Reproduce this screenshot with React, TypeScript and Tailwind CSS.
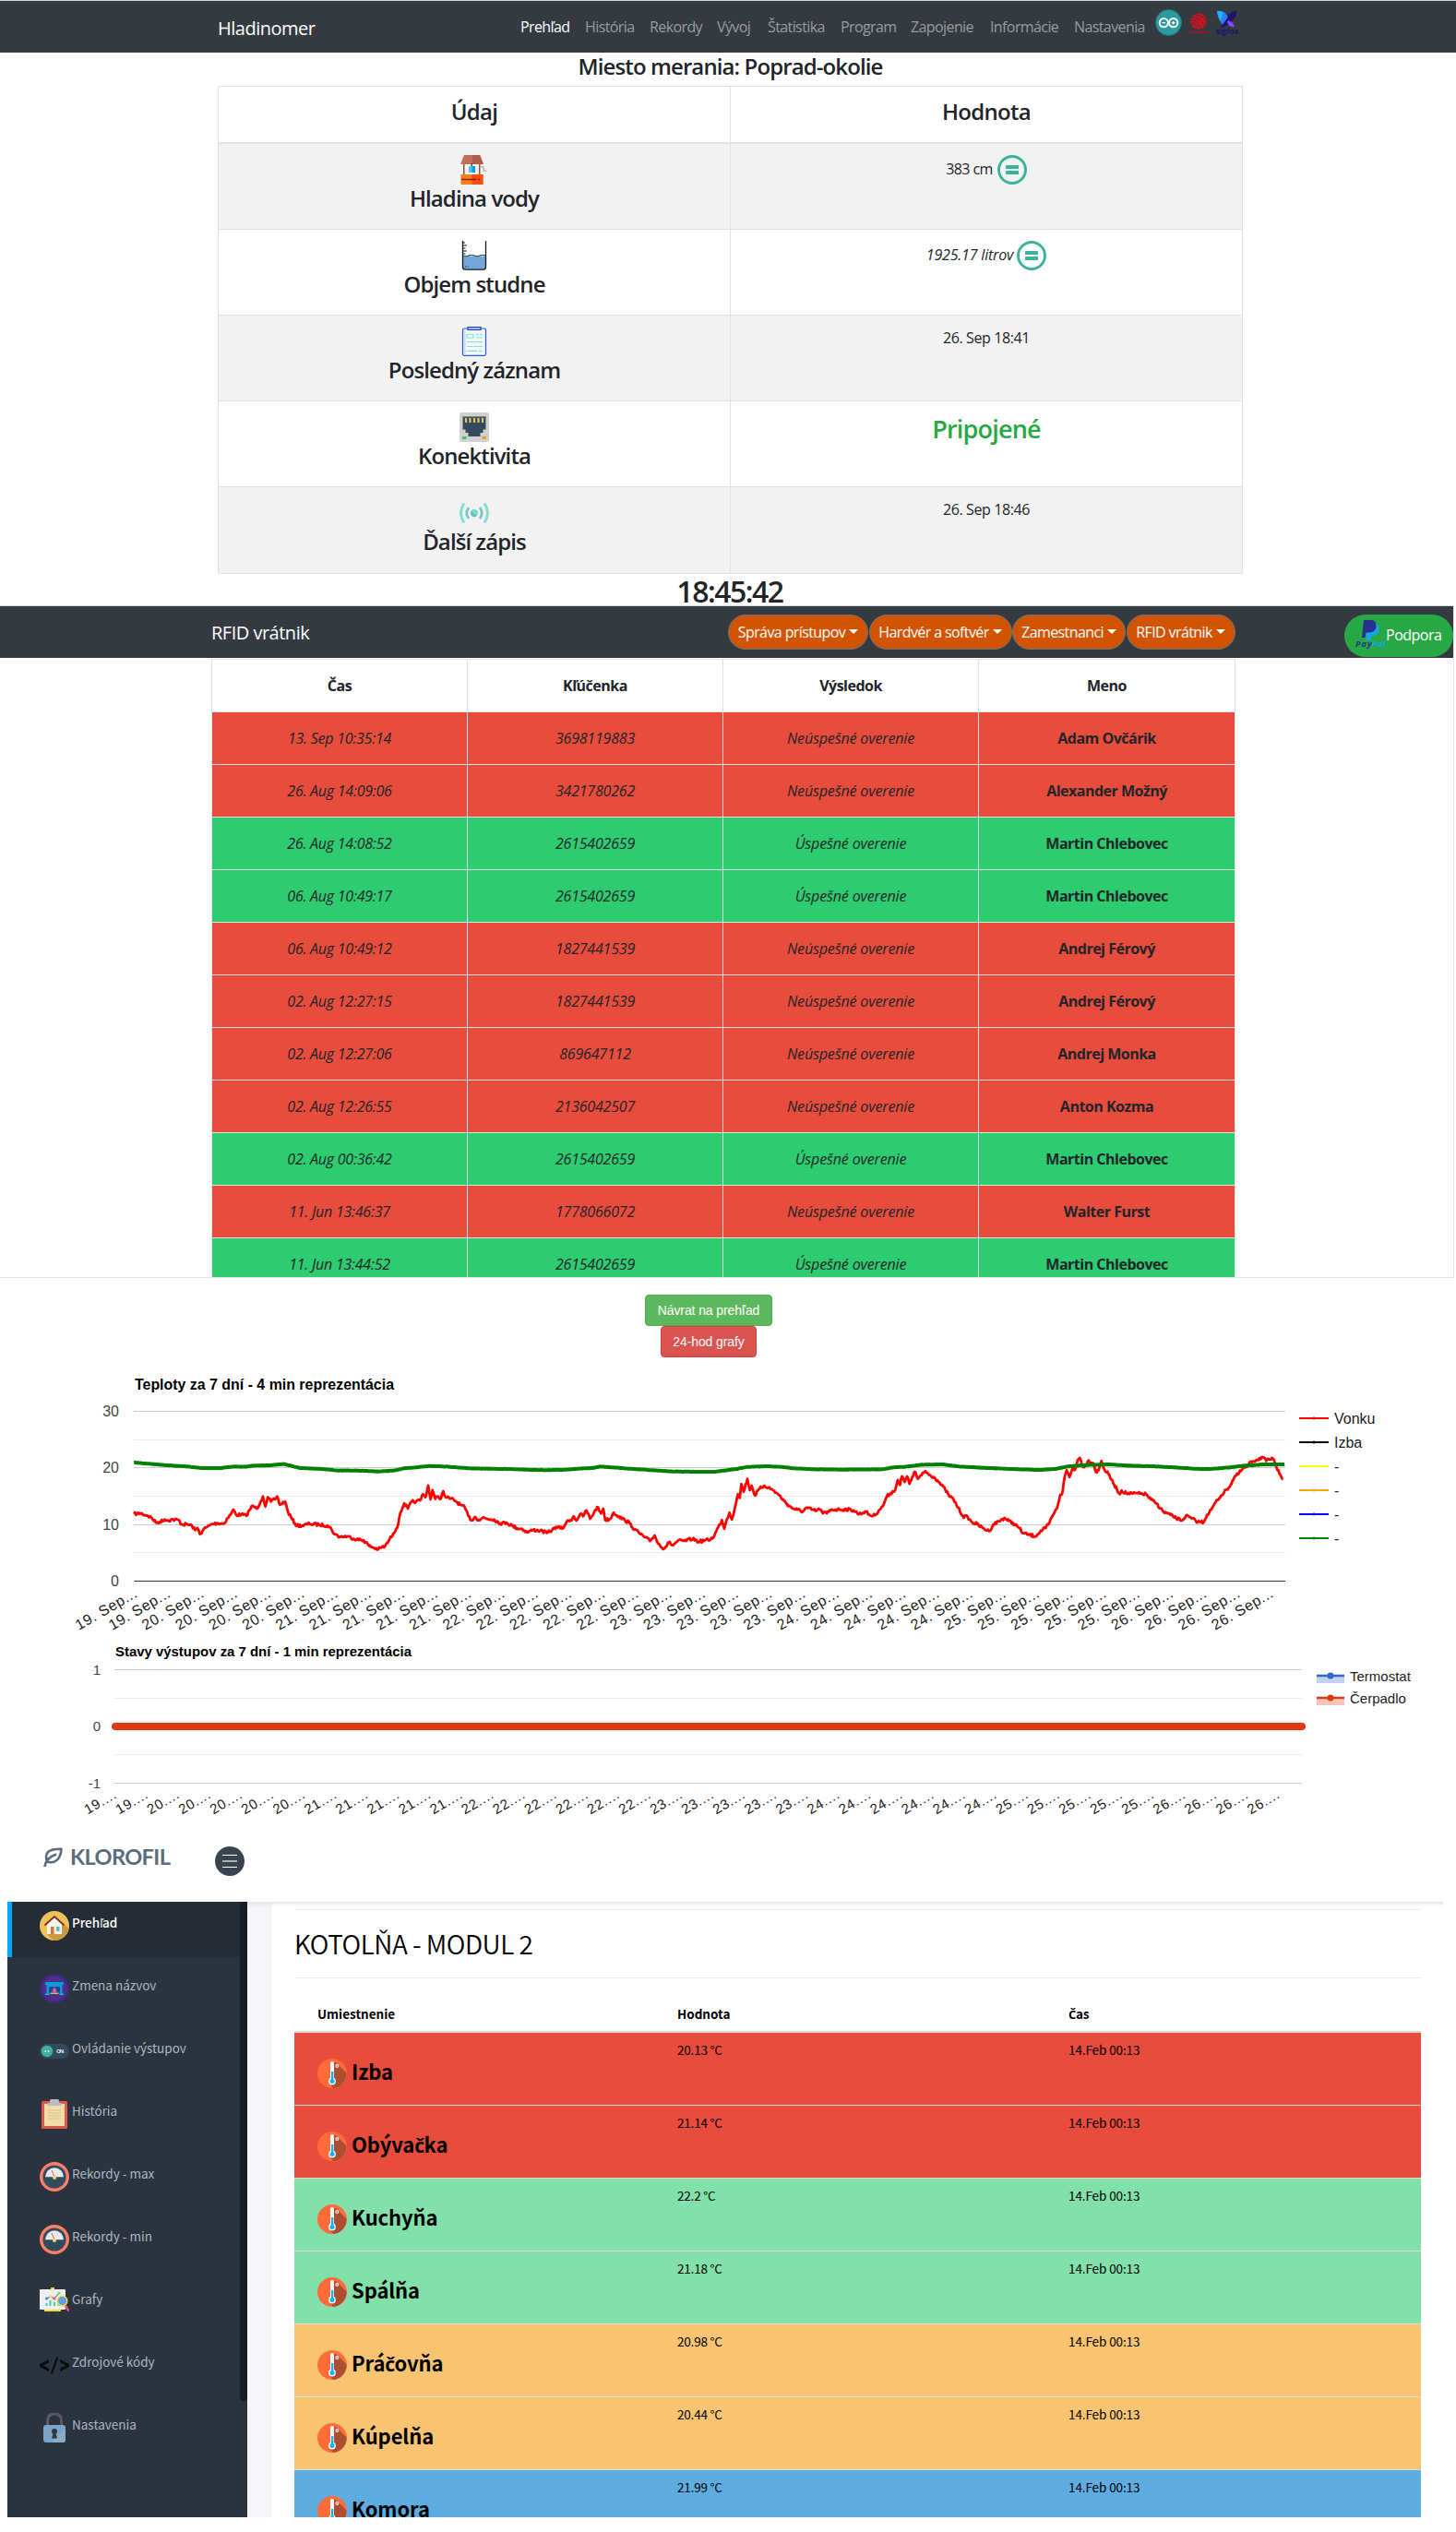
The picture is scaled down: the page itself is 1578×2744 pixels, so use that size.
import React from "react";

const UI = "font-['Open_Sans','Noto_Sans',sans-serif]";
const SRC = "font-['Noto_Sans_CJK_SC','Open_Sans',sans-serif]";

/* Carons on l and c come from Open Sans, which has those letters as single glyphs. */
const Mixed = ({ children }: { children: string }) => (
  <>
    {children.split(/([ľčČ])/).map((part, i) =>
      i % 2 ? <span key={i} className="font-['Open_Sans',sans-serif] text-[0.96em] leading-none tracking-[-0.03em]">{part}</span> : part
    )}
  </>
);

/* ---------- icons ---------- */

const WellIcon = () => (
  <svg width="32" height="32" viewBox="0 0 32 32">
    <path d="M5 0h17l4 10H1z" fill="#c2705a" />
    <path d="M14 0h8l4 10H14z" fill="#ad5c48" />
    <path d="M5.500 10H21v11H5.500z" fill="#f7f1ef" />
    <path d="M4 10h1.500v11H4zM21 10h1.500v11H21z" fill="#8a5244" />
    <path d="M12.500 9h1.500v4h-1.500z" fill="#7d3f33" />
    <path d="M10 12h7v7h-7z" fill="#4fc3f7" />
    <path d="M13.500 12H17v7h-3.500z" fill="#039be5" />
    <path d="M22 13h4v4h3" fill="none" stroke="#cbb3ab" strokeWidth="1.500" />
    <path d="M1.500 21h24v11h-24z" fill="#ff7a1a" />
    <path d="M13.500 21h12v11h-12z" fill="#ff4d0d" />
    <path d="M2 26.500h16M20 26.500h2" stroke="#7b2d10" strokeWidth="1.300" />
  </svg>
);

const BeakerIcon = () => (
  <svg width="32" height="32" viewBox="0 0 32 32">
    <path d="M3.500 16.500h25V29q0 2-2.500 2H6q-2.500 0-2.500-2z" fill="#74a7d8" />
    <path d="M3.500 0v28q0 3.200 3 3.200h19q3 0 3-3.200V0" fill="none" stroke="#15181c" strokeWidth="1.300" />
    <path d="M4 2h2M4 5h4M4 8h2.500M4 11h4M4 14h2.500" stroke="#15181c" strokeWidth="1.200" />
    <path d="M4 16q3 1.500 6 0t6 0 6 0 6 0" fill="none" stroke="#26445e" strokeWidth="1.200" />
    <path d="M6 28h2M9 28h1" stroke="#26445e" strokeWidth="1.200" />
  </svg>
);

const ReportIcon = () => (
  <svg width="32" height="32" viewBox="0 0 32 32">
    <rect x="3.500" y="2" width="25" height="29.300" rx="1.500" fill="#f3f8ff" stroke="#2f57cc" strokeWidth="1.200" />
    <path d="M4.500 3h2v27h-2z" fill="#ccd9f5" />
    <path d="M9 .7h14v2.600H9z" fill="#d5defa" stroke="#1540c4" strokeWidth="1.200" />
    <path d="M8 8.500h7v3.500H8z" fill="none" stroke="#7fe5d2" strokeWidth="1.200" />
    <path d="M18 8.500h3M22 8.500h3M18 12h7M8 16.500h17M8 21.500h6M15 21.500h10M8 26.300h11M21 26.300h4" stroke="#7fe5d2" strokeWidth="1.200" />
  </svg>
);

const PortIcon = () => (
  <svg width="32" height="32" viewBox="0 0 32 32">
    <rect width="32" height="32" rx="2.500" fill="#d0d2cf" />
    <path d="M3.500 4h25v14.500h-3V22h-3v4h-13v-4h-3v-3.500h-3z" fill="#34495e" />
    <path d="M3.500 4h25v1.200h-25z" fill="#7f8c8d" />
    <path d="M7 6v5M11.500 6v5M16 6v5M20.500 6v5M25 6v5" stroke="#e2c45c" strokeWidth="2.200" />
    <path d="M3 26h4.500v3H3z" fill="#4fba6f" />
    <path d="M24.500 26H29v3h-4.500z" fill="#f29c1f" />
  </svg>
);

const SignalIcon = () => (
  <svg width="32" height="32" viewBox="0 0 32 32" fill="none">
    <path d="M5 5.500Q-2 16 5 26.500M27 5.500Q34 16 27 26.500" stroke="#84ddd3" strokeWidth="3" />
    <path d="M10 10Q5.500 16 10 22M22 10Q26.500 16 22 22" stroke="#7cc5bf" strokeWidth="2.800" />
    <circle cx="16" cy="16" r="4.200" fill="#7cd9ce" />
    <path d="M12.500 14a4 4 0 0 0 6 5z" fill="#6fbab2" />
  </svg>
);

const EqualIcon = () => (
  <svg width="32" height="32" viewBox="0 0 32 32">
    <circle cx="16" cy="16" r="14.500" fill="none" stroke="#3bb29b" strokeWidth="2.900" />
    <rect x="9" y="11" width="14" height="4" rx=".6" fill="#3bb29b" />
    <rect x="9" y="17" width="14" height="4" rx=".6" fill="#3bb29b" />
  </svg>
);

const ArduinoIcon = () => (
  <svg width="29" height="29" viewBox="0 0 29 29">
    <circle cx="14.500" cy="14.500" r="14" fill="#2c9a9e" stroke="#14797f" />
    <g fill="none" stroke="#fff" strokeWidth="2">
      <circle cx="9.300" cy="14.700" r="4.600" />
      <circle cx="19.700" cy="14.700" r="4.600" />
    </g>
    <path d="M7.500 14.700h3.600M17.900 14.700h3.600M19.700 12.900v3.600" stroke="#fff" strokeWidth="1.300" />
  </svg>
);

const EspressifIcon = () => (
  <svg width="22" height="22" viewBox="0 0 22 22">
    <circle cx="11" cy="9" r="8.800" fill="#cc1220" />
    <g fill="none" stroke="#363b42" strokeWidth="1">
      <path d="M3 4.500q9-1 14 10" />
      <path d="M6 1.500q10 1 14 9" />
      <path d="M3 8q7-.5 10 8" />
      <path d="M4.500 11.500q4 0 5 5" />
    </g>
    <path d="M1 20.700h20" stroke="#b01020" strokeWidth="1.400" />
  </svg>
);

const SigfoxIcon = () => (
  <svg width="26" height="30" viewBox="0 0 26 30">
    <path d="M2 2Q9 0 14 9q1 5-4 10Q2 10 2 2z" fill="#1fb0fa" />
    <path d="M9 3q5 3 5 9l-4 7-4-6z" fill="#2d7df6" />
    <path d="M24 2q-8-1-11 8l-7 9q3 2 7-2 9-5 11-15z" fill="#25106e" />
    <path d="M14 12q6 2 7 7-6 1-8-5z" fill="#7c4bff" />
    <text x="13" y="27" textAnchor="middle" fontSize="8.500" fontWeight="700" fill="#22126b" fontFamily="Open Sans" textLength="25">sigfox</text>
  </svg>
);

const PaypalIcon = () => (
  <svg width="33" height="33" viewBox="0 0 33 33">
    <path d="M13 5h9q4.500 1 3.500 7t-8 6l-1 5h-5z" fill="#12a5ee" />
    <path d="M9 1h9q5 1 4.500 7t-8 6.500h-3L10.500 20H7z" fill="#27318f" />
    <text x="0" y="30" fontSize="9" fontWeight="700" fontStyle="italic" fill="#27318f" fontFamily="Open Sans" textLength="17">Pay</text>
    <text x="18" y="30" fontSize="9" fontWeight="700" fontStyle="italic" fill="#12a5ee" fontFamily="Open Sans" textLength="14">Pal</text>
  </svg>
);

const HouseIcon = () => (
  <svg width="32" height="32" viewBox="0 0 32 32">
    <circle cx="16" cy="16" r="16" fill="#eec15a" />
    <path d="M26 14l5.700 5A16 16 0 0 1 15 32l-7-7z" fill="#c99a44" />
    <path d="M8 14l8-8 8 8v11H8z" fill="#f3f3e8" />
    <path d="M5.500 15.500L16 6l10.500 9.500" fill="none" stroke="#7c2c22" strokeWidth="1.700" />
    <path d="M12 17h3.500v8H12z" fill="#e2702f" />
    <path d="M18 17h3.500v5H18z" fill="#5bb8c4" />
  </svg>
);

const FireplaceIcon = () => (
  <svg width="32" height="32" viewBox="0 0 32 32">
    <circle cx="16" cy="16" r="16" fill="#3d2a7d" />
    <circle cx="16" cy="16" r="13.500" fill="#4a3189" />
    <path d="M6 9h20v3H6zM7.500 12h17v10h-17z" fill="#1398dc" />
    <path d="M10 14h12v8H10z" fill="#134b8f" />
    <path d="M6 21.500h4.500V23H6zM21.500 21.500H26V23h-4.500z" fill="#1ab2e8" />
    <path d="M16 14.500q3 3 2 5.500h-4q-1-3 2-5.500z" fill="#f04fa3" />
    <path d="M11.500 20.500h9V22h-9z" fill="#d7b85a" />
  </svg>
);

const SwitchIcon = () => (
  <svg width="32" height="32" viewBox="0 0 32 32">
    <rect y="8" width="32" height="16" rx="8" fill="#324a5e" />
    <circle cx="8" cy="16" r="6.200" fill="#3db39e" />
    <path d="M5.500 16h1.500M8.800 16h1.500" stroke="#fff" strokeWidth="1.600" />
    <text x="18" y="18.200" fontSize="6" fontWeight="700" fill="#e4eaee" fontFamily="Open Sans" textLength="8.500">ON</text>
  </svg>
);

const ClipboardIcon = () => (
  <svg width="32" height="32" viewBox="0 0 32 32">
    <rect x="2" y="2" width="28" height="30" rx="1.500" fill="#e2574c" />
    <path d="M5 5h22v24H5z" fill="#f2ddaa" />
    <path d="M9 12h14M9 15h14M9 18h14M9 21h14" stroke="#d9c189" strokeWidth="1" />
    <path d="M8 7V5q0-1 1.500-1H11V1.500Q11 0 12.500 0h7Q21 0 21 1.500V4h1.500Q24 4 24 5v2z" fill="#b9bdc3" />
  </svg>
);

const GaugeIcon = () => (
  <svg width="32" height="32" viewBox="0 0 32 32">
    <circle cx="16" cy="16" r="14.300" fill="#324a5e" stroke="#ff7f66" strokeWidth="3.400" />
    <path d="M6 16.300a10 10 0 0 1 20 0z" fill="#e6e9ee" />
    <path d="M13 9l3 7" stroke="#f1543f" strokeWidth="1" />
    <circle cx="16" cy="17" r="2" fill="#ffd15c" />
  </svg>
);

const BoardIcon = () => (
  <svg width="32" height="32" viewBox="0 0 32 32">
    <path d="M11 25l-2 5M18 25l2 5" stroke="#27406b" strokeWidth="1.500" />
    <path d="M12 0h4v3h-4zM5 24h18v2H5z" fill="#f5dc2e" />
    <rect y="2" width="28" height="22" rx="1" fill="#eceef3" />
    <path d="M7.500 20v-3M11.500 20v-6M16 20v-4M20.500 20v-5" stroke="#43cfa9" strokeWidth="2" />
    <path d="M7 12l5-2 4 2 5-6" fill="none" stroke="#3c5a84" strokeWidth="1" />
    <circle cx="7.500" cy="12" r="1.500" fill="#3f7fe8" />
    <circle cx="12" cy="9.800" r="1.500" fill="#f5dc2e" />
    <circle cx="16" cy="12" r="1.500" fill="#f0507a" />
    <circle cx="21" cy="6" r="1.500" fill="#8ad05e" />
    <path d="M27.500 19l4 6.500" stroke="#f0507a" strokeWidth="2.600" />
    <circle cx="24.500" cy="14.500" r="5.300" fill="#5e9cf5" stroke="#f5dc2e" strokeWidth="1.500" />
  </svg>
);

const CodeIcon = () => (
  <svg width="32" height="32" viewBox="0 0 32 32">
    <path d="M10 10v3.200l-6.300 3.300 6.300 3.300V23L0 18v-3zM22 10v3.200l6.300 3.300-6.300 3.300V23l10-5v-3z" fill="#0a0c0f" />
    <path d="M18 7.500h2.300L14 25.500h-2.300z" fill="#0a0c0f" />
  </svg>
);

const LockIcon = () => (
  <svg width="32" height="32" viewBox="0 0 32 32">
    <path d="M8.500 14V8q0-7 7.500-7t7.500 7v6" fill="none" stroke="#5b5560" strokeWidth="3" />
    <path d="M9 14V8q1-6 7-6.500" fill="none" stroke="#6f6169" strokeWidth="1.200" />
    <rect x="4" y="13" width="24" height="19" rx="3" fill="#78a5c8" />
    <path d="M13 32L28 17v12q0 3-3 3z" fill="#86acc8" />
    <circle cx="16" cy="20" r="3" fill="#373540" />
    <path d="M15 21h2l2 6.500h-6z" fill="#373540" />
  </svg>
);

const ThermoIcon = () => (
  <svg width="32" height="32" viewBox="0 0 32 32">
    <circle cx="16" cy="16" r="16" fill="#ff6c3a" />
    <path d="M20.500 4.500l11 11A16 16 0 0 1 17 32l-3-4 4-24z" fill="#ad4e33" />
    <rect x="14" y="3" width="4" height="20" rx="2" fill="#f4f6f8" />
    <circle cx="16" cy="24.500" r="3.900" fill="#f4f6f8" />
    <path d="M15 14h2.300v9h-2.300z" fill="#0fb4f5" />
    <circle cx="16" cy="24.500" r="2.500" fill="#0fb4f5" />
    <circle cx="21.300" cy="8" r="1.400" fill="none" stroke="#f4f6f8" strokeWidth="1.100" />
  </svg>
);

const LeafIcon = () => (
  <svg width="22" height="22" viewBox="0 0 22 22" fill="none" stroke="#5c6b7c">
    <path d="M4 15.500C.5 5 7 1.500 19.500 1.800 19 12 13 18.500 4 15.500z" strokeWidth="2.600" strokeLinejoin="round" />
    <path d="M1.500 21Q2 12 14 7.500" strokeWidth="2.600" />
  </svg>
);

/* ---------- level meter ---------- */

const navLinks: [string, string][] = [
  ["Prehľad", "w-[54px] text-white"],
  ["História", "w-[54px]"],
  ["Rekordy", "w-[57px]"],
  ["Vývoj", "w-[39px]"],
  ["Štatistika", "w-[63px]"],
  ["Program", "w-[60px]"],
  ["Zapojenie", "w-[70px]"],
  ["Informácie", "w-[75px]"],
  ["Nastavenia", "w-[78px]"],
];

const levelRows: { icon: React.ReactNode; label: string; value: React.ReactNode }[] = [
  { icon: <WellIcon />, label: "Hladina vody", value: <div className="flex items-center gap-[5px]"><span className="-mt-0.5">383 cm</span><EqualIcon /></div> },
  { icon: <BeakerIcon />, label: "Objem studne", value: <div className="flex items-center gap-1"><i className="-mt-0.5 tracking-[-0.200px]">1925.17 litrov</i><EqualIcon /></div> },
  { icon: <ReportIcon />, label: "Posledný záznam", value: <span className="tracking-[-0.400px]">26. Sep 18:41</span> },
  { icon: <PortIcon />, label: "Konektivita", value: <span className="text-[27px] leading-[36px] font-semibold tracking-[-0.800px] text-[#28a745]">Pripojené</span> },
  { icon: <SignalIcon />, label: "Ďalší zápis", value: <span className="tracking-[-0.400px]">26. Sep 18:46</span> },
];

function LevelMeter() {
  return (
    <section className={`${UI} flex h-[656px] flex-col items-center text-[#212529]`}>
      <nav className="flex h-[57px] w-full shrink-0 border-t border-[#d5d8da] bg-[#343a40] pl-[236px]">
        <div className="w-[328px] pt-[15px] text-xl leading-[30px] tracking-[-0.5px] text-white">Hladinomer</div>
        <div className="flex gap-4 pt-4 text-base leading-6 tracking-[-0.6px] whitespace-nowrap text-[#999c9f]">
          {navLinks.map(([t, c]) => (
            <a key={t} className={c}>{t}</a>
          ))}
        </div>
        <div className="ml-[10px] flex gap-[7px]">
          <span className="pt-[9px]"><ArduinoIcon /></span>
          <span className="pt-[13px]"><EspressifIcon /></span>
          <span className="pt-[9px]"><SigfoxIcon /></span>
        </div>
      </nav>
      <h4 className="ml-[5px] h-[36px] shrink-0 text-2xl leading-[30px] font-semibold tracking-[-0.9px]">Miesto merania: Poprad-okolie</h4>
      <div className="ml-[5px] w-[1111px] shrink-0 border border-[#dee2e6]">
        <div className="flex h-[62px] border-b-2 border-[#dee2e6] text-2xl font-semibold tracking-[-0.7px]">
          <div className="w-[554px] pt-[11px] text-center leading-[32px]">Údaj</div>
          <div className="flex-1 border-l border-[#dee2e6] pt-[11px] text-center leading-[32px]">Hodnota</div>
        </div>
        {levelRows.map((r, i) => (
          <div key={r.label} className={`flex h-[93px] border-[#dee2e6] ${i < 4 ? "border-b" : ""} ${i % 2 ? "bg-white" : "bg-[#f2f2f2]"}`}>
            <div className="flex w-[554px] flex-col items-center pt-3">
              {r.icon}
              <span className="text-2xl leading-[30px] font-semibold tracking-[-0.9px]">{r.label}</span>
            </div>
            <div className="flex flex-1 items-start justify-center border-l border-[#dee2e6] pt-3 text-base tracking-[-0.6px]">{r.value}</div>
          </div>
        ))}
      </div>
      <div className="ml-[4px] text-[32px] leading-[38px] font-semibold tracking-[-1.500px]">18:45:42</div>
    </section>
  );
}

/* ---------- RFID access log ---------- */

const accessRows: [string, string, boolean, string][] = [
  ["13. Sep 10:35:14", "3698119883", false, "Adam Ovčárik"],
  ["26. Aug 14:09:06", "3421780262", false, "Alexander Možný"],
  ["26. Aug 14:08:52", "2615402659", true, "Martin Chlebovec"],
  ["06. Aug 10:49:17", "2615402659", true, "Martin Chlebovec"],
  ["06. Aug 10:49:12", "1827441539", false, "Andrej Férový"],
  ["02. Aug 12:27:15", "1827441539", false, "Andrej Férový"],
  ["02. Aug 12:27:06", "869647112", false, "Andrej Monka"],
  ["02. Aug 12:26:55", "2136042507", false, "Anton Kozma"],
  ["02. Aug 00:36:42", "2615402659", true, "Martin Chlebovec"],
  ["11. Jun 13:46:37", "1778066072", false, "Walter Furst"],
  ["11. Jun 13:44:52", "2615402659", true, "Martin Chlebovec"],
];

const menus: [string, string][] = [
  ["Správa prístupov", "w-[152px]"],
  ["Hardvér a softvér", "w-[155px]"],
  ["Zamestnanci", "w-[123px]"],
  ["RFID vrátnik", "w-[118px]"],
];

function AccessLog() {
  return (
    <section className={`${UI} h-[729px] w-[1576px] overflow-hidden border-r border-b border-[#e3e5e7] text-[#212529]`}>
      <nav className="flex h-[57px] border-t border-[#d5d8da] bg-[#343a40] pl-[229px]">
        <div className="w-[560px] pt-[14px] text-xl leading-[30px] tracking-[-0.5px] text-white">RFID vrátnik</div>
        <div className="flex gap-[0.500px] pt-[9px]">
          {menus.map(([t, w]) => (
            <button key={t} className={`${w} flex h-[38px] items-center justify-center gap-1 rounded-[19px] border border-[#6c757d] bg-[#d35400] pb-px text-base tracking-[-0.6px] whitespace-nowrap text-white`}>
              {t}
              <span className="border-x-[5px] border-t-[5px] border-x-transparent border-t-white" />
            </button>
          ))}
        </div>
        <button className="mt-[9px] ml-auto flex h-[46px] w-[118px] items-center rounded-[23px] bg-[#28a745] pb-[3px] pl-[12px] text-base tracking-[-0.5px] text-white">
          <PaypalIcon />
          Podpora
        </button>
      </nav>
      <div className="mt-[1px] ml-[229px] w-[1110px] border border-[#dee2e6]">
        <div className="grid h-[56px] grid-cols-4 divide-x divide-[#dee2e6] text-center text-base leading-[56px] font-bold tracking-[-0.5px]">
          <div>Čas</div>
          <div>Kľúčenka</div>
          <div>Výsledok</div>
          <div>Meno</div>
        </div>
        {accessRows.map(([t, k, ok, n]) => (
          <div key={t} className={`grid h-[57px] grid-cols-4 divide-x divide-[#dee2e6] border-t border-[#dee2e6] text-center text-base leading-[56px] tracking-[-0.500px] ${ok ? "bg-[#2ecc71]" : "bg-[#e74c3c]"}`}>
            <i className="tracking-[-0.250px]">{t}</i>
            <i className="tracking-[-0.200px]">{k}</i>
            <i className="tracking-[-0.150px]">{ok ? "Úspešné overenie" : "Neúspešné overenie"}</i>
            <b>{n}</b>
          </div>
        ))}
      </div>
    </section>
  );
}

/* ---------- charts ---------- */

type Pt = [number, number];
const outdoorA: Pt[] = [[167,782],[180,780],[195,787],[205,795],[213,810],[222,808],[232,800],[240,803],[250,800],[262,802],[268,816],[280,816],[290,820],[297,835],[302,828],[307,848],[315,832],[322,825],[333,815],[345,812],[358,814],[366,795],[372,785],[378,768],[384,785],[395,784],[406,788],[412,770],[419,755],[428,765],[436,742],[441,725],[446,758],[451,728],[458,742],[466,735],[471,725],[477,752],[488,742],[494,775],[503,800],[513,820],[525,820],[540,814],[560,817],[578,820],[586,830],[593,848],[604,856],[620,855],[640,865],[655,868],[666,885],[676,892],[686,897],[694,890],[700,888],[708,870],[718,845],[728,818],[733,778],[741,748],[749,765],[757,742],[766,742],[775,738],[781,718],[786,728],[792,690],[797,735],[801,705],[807,733],[813,725],[819,732],[824,708],[829,728],[840,732],[850,740],[860,752],[870,762],[877,788],[884,803],[892,792],[899,802],[908,794],[920,799],[932,800],[945,813],[958,810],[970,820],[980,828],[992,831],[1002,842],[1015,834],[1030,836],[1044,844],[1055,835],[1064,824],[1077,830],[1086,808],[1095,802],[1101,790],[1107,803],[1115,782],[1121,790],[1128,770],[1136,798],[1144,778],[1151,760],[1159,780],[1164,765],[1168,802],[1179,798],[1186,778],[1197,790],[1210,803],[1220,812],[1230,832],[1241,845],[1252,858],[1263,870],[1273,852],[1280,878],[1293,895],[1303,875],[1312,884],[1322,870],[1336,870],[1354,863],[1366,872],[1380,868],[1392,865],[1400,852],[1408,825],[1416,802],[1421,830],[1426,800],[1432,778],[1437,800],[1443,765],[1450,718],[1454,730],[1457,685],[1462,710],[1470,668],[1475,705],[1479,690],[1486,722],[1496,700],[1506,690],[1515,697],[1525,705],[1538,722],[1548,740],[1560,758],[1568,765]];
const outdoorB: Pt[] = [[165,768],[177,774],[184,762],[196,768],[206,772],[211,765],[218,776],[228,780],[238,768],[255,768],[270,767],[285,770],[297,783],[310,774],[322,788],[331,786],[339,770],[347,758],[356,725],[364,715],[374,703],[379,672],[384,688],[388,660],[394,678],[399,660],[404,684],[410,662],[416,645],[422,668],[430,656],[438,643],[446,655],[456,662],[464,673],[472,688],[480,702],[488,722],[498,735],[508,762],[518,790],[528,792],[536,808],[548,815],[560,828],[574,838],[583,816],[595,806],[606,795],[616,805],[628,815],[638,828],[646,845],[660,850],[672,855],[682,840],[694,828],[702,812],[710,785],[718,765],[725,720],[729,718],[735,660],[739,640],[745,662],[752,632],[756,640],[762,608],[767,600],[774,630],[779,625],[786,608],[796,618],[801,645],[807,640],[813,610],[820,640],[828,652],[838,682],[846,702],[852,718],[856,706],[866,715],[880,716],[895,716],[908,718],[918,735],[930,748],[945,775],[960,785],[972,796],[985,803],[993,788],[1005,797],[1018,808],[1031,808],[1038,785],[1047,768],[1056,745],[1068,722],[1080,702],[1088,688],[1096,662],[1106,650],[1114,635],[1124,628],[1132,612],[1144,606],[1156,597],[1164,610],[1170,605],[1178,602],[1184,625],[1190,640],[1194,655],[1200,668]];
const indoorA: Pt[] = [[167,615],[200,619],[230,623],[280,628],[310,633],[350,633],[380,628],[405,629],[420,625],[455,624],[485,620],[500,625],[520,633],[560,635],[600,641],[640,641],[686,644],[720,641],[740,634],[770,630],[795,626],[830,628],[880,634],[920,635],[960,636],[1000,638],[1045,640],[1085,638],[1110,635],[1140,633],[1158,628],[1185,631],[1230,636],[1270,640],[1310,644],[1360,645],[1400,645],[1430,639],[1450,635],[1470,629],[1510,627],[1540,629],[1560,632]];
const indoorB: Pt[] = [[150,633],[200,637],[260,638],[345,637],[370,631],[400,628],[430,622],[475,621],[510,628],[560,632],[620,636],[680,639],[715,636],[740,628],[780,623],[830,621],[870,625],[920,627],[970,631],[1010,635],[1045,636],[1085,631],[1120,625],[1160,621],[1203,621]];

const toPlot = (a: Pt[], b: Pt[]): Pt[] => [
  ...a.map(([x, y]): Pt => [60 + x / 1.96, 1380 + y / 3]),
  ...b.map(([x, y]): Pt => [780 + x / 1.965, 1380 + y / 3]),
];

/* Densifies a series and adds a small repeatable sensor ripple. */
const ripple = (pts: Pt[], amp: number): string => {
  let seed = 7;
  const rnd = () => ((seed = (seed * 16807) % 2147483647) / 2147483647 - 0.5) * 2;
  const out: string[] = [];
  pts.forEach(([x, y], i) => {
    out.push(`${x.toFixed(1)},${y.toFixed(1)}`);
    const n = pts[i + 1];
    if (!n) return;
    const steps = Math.max(1, Math.round((n[0] - x) / 1.1));
    for (let s = 1; s < steps; s++) {
      const f = s / steps;
      out.push(`${(x + (n[0] - x) * f).toFixed(1)},${(y + (n[1] - y) * f + rnd() * amp).toFixed(1)}`);
    }
  });
  return out.join(" ");
};

const outdoor = ripple(toPlot(outdoorA, outdoorB), 1.6);
const indoor = ripple(toPlot(indoorA, indoorB), 0.15);

const days = (counts: number[]) => counts.flatMap((c, i) => Array<number>(c).fill(19 + i));
const tempDays = days([2, 4, 5, 5, 5, 5, 5, 4]);
const stateDays = days([2, 5, 5, 6, 5, 6, 5, 4]);

const legend: [string, string][] = [
  ["Vonku", "#ff0000"],
  ["Izba", "#000000"],
  ["-", "#ffff00"],
  ["-", "#ffa500"],
  ["-", "#0000ff"],
  ["-", "#008000"],
];

function Charts() {
  return (
    <section className="flex h-[600px] flex-col font-['Liberation_Sans',sans-serif]">
      <div className="ml-[699px] flex w-[138px] flex-col items-center pt-[18px] text-sm tracking-[-0.1px] text-white">
        <button className="h-[34px] w-[138px] rounded border border-[#4cae4c] bg-[#5cb85c]">Návrat na prehľad</button>
        <button className="h-[34px] w-[104px] rounded border border-[#d43f3a] bg-[#d9534f]">24-hod grafy</button>
      </div>
      <svg width="1578" height="304" viewBox="0 1471 1578 304" fontFamily="Liberation Sans" fontSize="16">
        <text x="146" y="1506" fontWeight="700" textLength="281" lengthAdjust="spacingAndGlyphs">Teploty za 7 dní - 4 min reprezentácia</text>
        {[1560.5, 1621.5, 1682.5].map((y) => <path key={y} d={`M145 ${y}H1393`} stroke="#ebebeb" />)}
        {[1529.5, 1590.5, 1652.5].map((y) => <path key={y} d={`M145 ${y}H1393`} stroke="#ccc" />)}
        <path d="M145 1713.500H1393" stroke="#333" />
        {[["30", 1535], ["20", 1596], ["10", 1658], ["0", 1719]].map(([t, y]) => (
          <text key={t} x="129" y={y} textAnchor="end" fill="#444">{t}</text>
        ))}
        <polyline points={outdoor} fill="none" stroke="#f00" strokeWidth="2.800" strokeLinejoin="round" />
        <polyline points={indoor} fill="none" stroke="#008000" strokeWidth="4" strokeLinejoin="round" />
        {tempDays.map((d, i) => (
          <text key={i} transform={`translate(${149.5 + i * 36.22} 1730) rotate(-30)`} x="-74" textLength="74" fill="#222">{`${d}. Sep...`}</text>
        ))}
        {legend.map(([t, c], i) => (
          <g key={i}>
            <path d={`M1408 ${1537 + i * 26}h32`} stroke={c} strokeWidth="2" />
            <path d={`M1424 ${1535 + i * 26}v4`} stroke={c} strokeWidth="1.500" opacity=".5" />
            <text x="1446" y={1543 + i * 26} fill="#222">{t}</text>
          </g>
        ))}
      </svg>
      <svg width="1578" height="210" viewBox="0 1775 1578 210" fontFamily="Liberation Sans" fontSize="15">
        <text x="125" y="1795" fontWeight="700" textLength="321" lengthAdjust="spacingAndGlyphs">Stavy výstupov za 7 dní - 1 min reprezentácia</text>
        {[1840.5, 1901.5].map((y) => <path key={y} d={`M124 ${y}H1411`} stroke="#ebebeb" />)}
        {[1809.5, 1932.5].map((y) => <path key={y} d={`M124 ${y}H1411`} stroke="#ccc" />)}
        {[["1", 1815], ["0", 1876], ["-1", 1938]].map(([t, y]) => (
          <text key={t} x="109" y={y} textAnchor="end" fill="#444">{t}</text>
        ))}
        <path d="M125 1871H1411" stroke="#dc3912" strokeWidth="8" strokeLinecap="round" />
        {stateDays.map((d, i) => (
          <text key={i} transform={`translate(${127 + i * 34.07} 1948) rotate(-30)`} x="-37" textLength="37" fill="#222">{`${d}....`}</text>
        ))}
        {[["Termostat", "#3366cc", "#c2d1f0", 1816], ["Čerpadlo", "#dc3912", "#f5c4b8", 1840]].map(([t, c, f, y]) => (
          <g key={t}>
            <path d={`M1427 ${y}h30v8h-30z`} fill={String(f)} />
            <path d={`M1427 ${y}h30`} stroke={String(c)} strokeWidth="2.500" />
            <circle cx="1442" cy={y} r="3.600" fill={String(c)} />
            <text x="1463" y={Number(y) + 6} fill="#222">{t}</text>
          </g>
        ))}
      </svg>
    </section>
  );
}

/* ---------- boiler room dashboard ---------- */

const sideItems: [string, React.ReactNode][] = [
  ["Prehľad", <HouseIcon />],
  ["Zmena názvov", <FireplaceIcon />],
  ["Ovládanie výstupov", <SwitchIcon />],
  ["História", <ClipboardIcon />],
  ["Rekordy - max", <GaugeIcon />],
  ["Rekordy - min", <GaugeIcon />],
  ["Grafy", <BoardIcon />],
  ["Zdrojové kódy", <CodeIcon />],
  ["Nastavenia", <LockIcon />],
];

const rooms: [string, string, string][] = [
  ["Izba", "20.13 °C", "bg-[#e74c3c]"],
  ["Obývačka", "21.14 °C", "bg-[#e74c3c]"],
  ["Kuchyňa", "22.2 °C", "bg-[#82e0aa]"],
  ["Spálňa", "21.18 °C", "bg-[#82e0aa]"],
  ["Práčovňa", "20.98 °C", "bg-[#f8c471]"],
  ["Kúpelňa", "20.44 °C", "bg-[#f8c471]"],
  ["Komora", "21.99 °C", "bg-[#5dade2]"],
];

function Dashboard() {
  return (
    <section className={`${SRC} flex h-[743px] flex-col text-black`}>
      <header className="flex h-[76px] shrink-0 pl-[47px]">
        <div className="flex h-[56px] w-[186px] items-center gap-[7px]">
          <LeafIcon />
          <span className="font-['Lato',sans-serif] text-[23.500px] font-bold tracking-[-0.600px] text-[#5c6b7c]">KLOROFIL</span>
        </div>
        <button className="mt-4 flex size-8 flex-col items-center justify-center gap-[5px] rounded-full bg-[#37444d]">
          <span className="h-px w-4 bg-white" />
          <span className="h-[2px] w-4 bg-[#aab1b6]" />
          <span className="h-px w-4 bg-white" />
        </button>
      </header>
      <div className="ml-2 flex h-[667px] w-[1556px] overflow-hidden">
        <aside className="flex w-[260px] shrink-0 justify-between bg-[#2b333e]">
          <div className="flex-1">
            {sideItems.map(([t, icon], i) => (
              <a key={t} className={`flex gap-[3px] pt-[10px] text-[13.5px] leading-5 whitespace-nowrap ${i === 0 ? "h-[60px] border-l-[5px] border-[#00aaff] bg-[#252c35] pl-[30px] text-white" : "mt-2 h-[60px] pl-[35px] text-[#aeb7c2]"}`}>
                {icon}
                <span className={i === 0 ? "pt-[2px] font-medium" : "pt-[2px]"}><Mixed>{t}</Mixed></span>
              </a>
            ))}
          </div>
          <div className="h-[541px] w-2 rounded-b bg-[#191d25]" />
        </aside>
        <div className="w-[25px] shrink-0 bg-gradient-to-b from-[#e6e6ea] via-[#f5f5fa] via-[1%] to-[#f5f5fa]" />
        <main className="flex-1 border-l border-[#ececf1]">
          <div className="h-[8px] bg-gradient-to-b from-[#e4e4e4] to-white to-60%" />
          <div className="ml-[25px] w-[1221px]">
            <h3 className="h-[75px] border-y border-[#ededed] pt-[18px] text-[28px] leading-[36px] font-[350] tracking-[-0.500px]">KOTOLŇA - MODUL 2</h3>
            <div className="flex h-[59px] border-b-2 border-[#ddd] pt-[28px] pl-[25px] text-[13.5px] leading-5 font-bold">
              <div className="w-[390px]">Umiestnenie</div>
              <div className="w-[424px]">Hodnota</div>
              <div><Mixed>Čas</Mixed></div>
            </div>
            {rooms.map(([n, v, bg]) => (
              <div key={n} className={`flex h-[79px] border-b border-[#ddd] pl-[25px] text-[13.5px] leading-5 ${bg}`}>
                <div className="flex w-[390px] gap-[5px] pt-[28px]">
                  <ThermoIcon />
                  <span className="-mt-[2px] h-[30px] text-[22px] leading-[30px] font-bold tracking-[-0.100px]"><Mixed>{n}</Mixed></span>
                </div>
                <div className="w-[424px] pt-[8px] tracking-[-0.2px]">{v}</div>
                <div className="pt-[8px] tracking-[-0.1px]">14.Feb 00:13</div>
              </div>
            ))}
          </div>
        </main>
      </div>
    </section>
  );
}

export default function App() {
  return (
    <div className="h-[2744px] w-[1578px] overflow-hidden bg-white">
      <LevelMeter />
      <AccessLog />
      <Charts />
      <Dashboard />
    </div>
  );
}
